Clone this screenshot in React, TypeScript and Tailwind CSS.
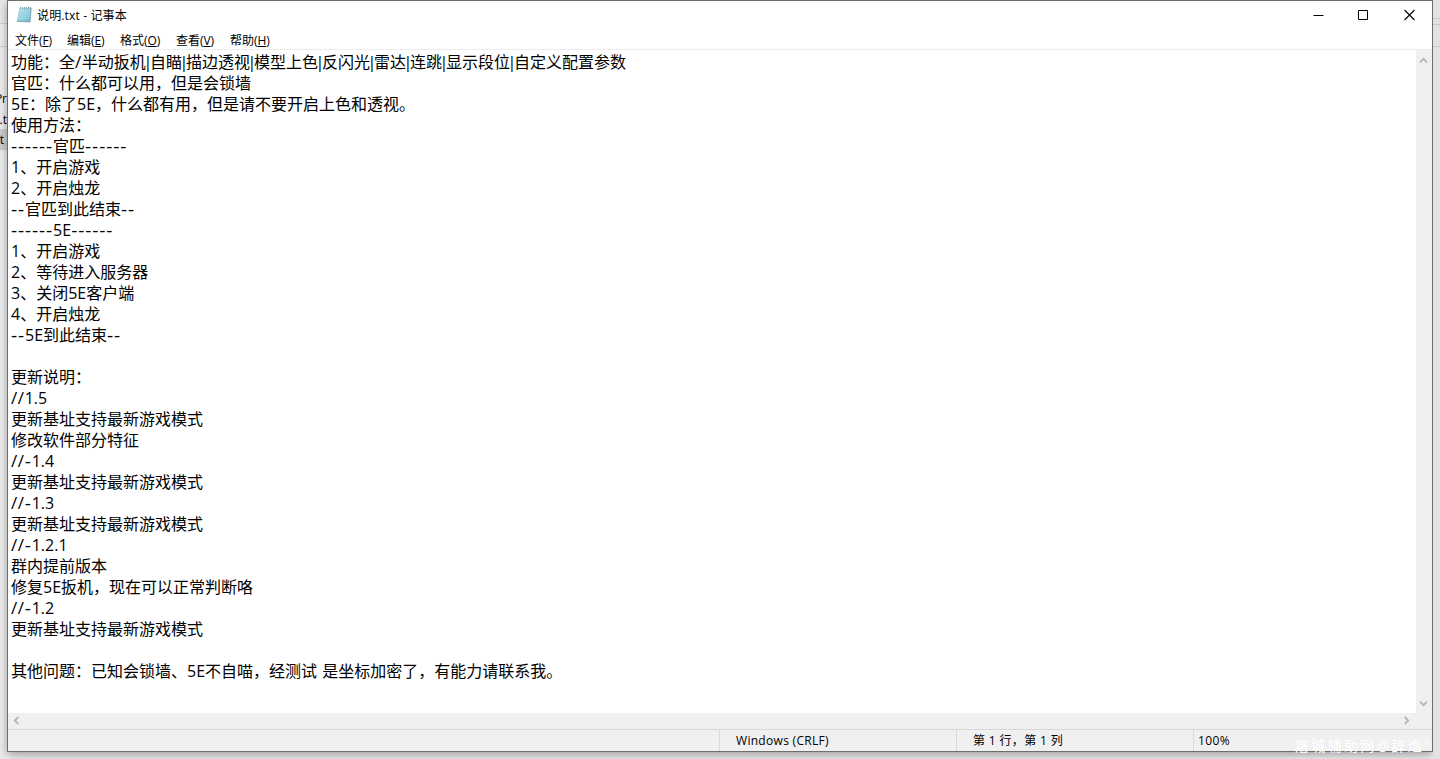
const lines = [
  '功能：全/半动扳机|自瞄|描边透视|模型上色|反闪光|雷达|连跳|显示段位|自定义配置参数',
  '官匹：什么都可以用，但是会锁墙',
  '5E：除了5E，什么都有用，但是请不要开启上色和透视。',
  '使用方法：',
  '------官匹------',
  '1、开启游戏',
  '2、开启烛龙',
  '--官匹到此结束--',
  '------5E------',
  '1、开启游戏',
  '2、等待进入服务器',
  '3、关闭5E客户端',
  '4、开启烛龙',
  '--5E到此结束--',
  '',
  '更新说明：',
  '//1.5',
  '更新基址支持最新游戏模式',
  '修改软件部分特征',
  '//-1.4',
  '更新基址支持最新游戏模式',
  '//-1.3',
  '更新基址支持最新游戏模式',
  '//-1.2.1',
  '群内提前版本',
  '修复5E扳机，现在可以正常判断咯',
  '//-1.2',
  '更新基址支持最新游戏模式',
  '',
  '其他问题：已知会锁墙、5E不自喵，经测试 是坐标加密了，有能力请联系我。',
];

const menus = [
  ['文件', 'F', 'w-[52px]'],
  ['编辑', 'E', 'w-[53px]'],
  ['格式', 'O', 'w-[56px]'],
  ['查看', 'V', 'w-[54px]'],
  ['帮助', 'H', 'w-[52px]'],
];

function Run({ text }: { text: string }) {
  if (text.startsWith('-'))
    return <span className="align-[-1px] text-[19px] leading-none tracking-[0.9px]">{text}</span>;
  if (text.startsWith('/')) return <span className="text-[17px] leading-none tracking-[0.6px]">{text}</span>;
  if (text === '|') return <span className="-ml-[2.4px] tracking-[-2.4px]">{text}</span>;
  if (text === ' ') return <span className="tracking-[1px]">{text}</span>;
  return <span>{text}</span>;
}

function Line({ text }: { text: string }) {
  const runs = text.split(/(-+|\/+|\|| )/).filter(Boolean);
  return (
    <div className="h-[21px] whitespace-pre">
      {runs.map((run, i) => (
        <Run key={i} text={run} />
      ))}
    </div>
  );
}

function Chevron({ className }: { className: string }) {
  return (
    <svg className={className} width="9" height="9" viewBox="0 0 9 9" fill="none" stroke="#b5b5b5" strokeWidth="1.8">
      <path d="M1 6.3 4.5 2.8 8 6.3" />
    </svg>
  );
}

function NotepadIcon() {
  return (
    <svg width="16" height="18" viewBox="0 0 16 18">
      <defs>
        <linearGradient id="paper" x1="0" y1="0" x2="1" y2="1">
          <stop offset="0" stopColor="#c9e8f1" />
          <stop offset=".6" stopColor="#8fcde0" />
          <stop offset="1" stopColor="#62aec8" />
        </linearGradient>
      </defs>
      <path d="M3 2 15.2 1.6 14 16 .8 15.3Z" fill="url(#paper)" />
      <path d="M2.5 6h11.6M2.3 8.2h11.6M2.1 10.4h11.6M1.9 12.6h11.4" stroke="#a5d6e4" strokeWidth=".7" />
      <path d="M15.2 2 14 16 .8 15.3" fill="none" stroke="#6f98a6" strokeWidth=".8" />
      <path d="M4.5 1v2.2M6.5 1v2.2M8.5 1v2.2M10.5 1v2.2M12.5 .8v2.2M14.3 .8v2.2" stroke="#7d9aa5" strokeWidth=".8" />
    </svg>
  );
}

export default function App() {
  return (
    <div className="relative h-[759px] w-[1440px] overflow-hidden bg-[#f0f0f0] font-['Open_Sans','Noto_Sans_CJK_SC',sans-serif] text-black">
      <div className="flex h-full">
        <div className="flex w-[7px] shrink-0 flex-col overflow-hidden bg-[#ededed] text-[12px] leading-[21px]">
          <div className="h-[24px] shrink-0 border-b border-[#d2d2d2] bg-[#e9e9e9]" />
          <div className="h-[23px] shrink-0 border-b border-[#d2d2d2]" />
          <div className="mt-[41px] flex h-[21px] justify-end">Pr</div>
          <div className="flex h-[20px] justify-end">g.t</div>
          <div className="flex h-[21px] justify-end bg-[#cfcfcf] pr-[3px]">t</div>
        </div>
        <div className="flex h-[752px] w-[1426px] shrink-0 flex-col border border-[#6e6e6e] bg-white shadow-[0_3px_9px_rgba(0,0,0,0.35)]">
          <header className="flex h-[28px] shrink-0 items-center pl-[8px] text-[12px]">
            <NotepadIcon />
            <span className="ml-[5px] w-[120px] whitespace-pre pt-px tracking-[0.15px]">说明.txt - 记事本</span>
            <div className="ml-auto flex items-center pr-[16px]">
              <svg width="103" height="12" viewBox="0 0 103 12" fill="none" stroke="black">
                <path d="M.5 6.5h10" />
                <path d="M45.5 1.5h9v9h-9z" />
                <path d="m91.5 1 10 10m0-10-10 10" strokeWidth="1.1" />
              </svg>
            </div>
          </header>
          <nav className="flex h-[21px] shrink-0 items-center border-b border-[#ededed] pl-[7px] pt-[4px] text-[12px] leading-[16px]">
            {menus.map(([label, key, width]) => (
              <span key={key} className={`${width} shrink-0 whitespace-nowrap`}>
                {label}<span className="tracking-[-0.1px]">(<u className="underline-offset-1">{key}</u>)</span>
              </span>
            ))}
          </nav>
          <div className="flex min-h-0 flex-1">
            <main className="flex-1 pl-[3px] pt-[2px] text-[16px] leading-[21px]">
              {lines.map((line, i) => (
                <Line key={i} text={line} />
              ))}
            </main>
            <div className="flex w-[16px] flex-col items-start justify-between bg-[#f0f0f0] pb-[5px] pl-[3px] pt-[6px]">
              <Chevron className="" />
              <Chevron className="rotate-180" />
            </div>
          </div>
          <div className="flex h-[16px] shrink-0 items-center justify-between bg-[#f0f0f0] pb-px pl-[4px] pr-[21px]">
            <Chevron className="-rotate-90" />
            <Chevron className="rotate-90" />
          </div>
          <footer className="flex h-[22px] shrink-0 items-center border-t border-[#d7d7d7] bg-[#f0f0f0] text-[12px] leading-[21px]">
            <div className="w-[711px]" />
            <div className="h-full w-[237px] border-l border-[#d9d9d9] pl-[16px] tracking-[0.3px]">Windows (CRLF)</div>
            <div className="h-full w-[237px] border-l border-[#d9d9d9] pl-[16px] tracking-[0.35px]">第 1 行，第 1 列</div>
            <div className="h-full border-l border-[#d9d9d9] pl-[4px] tracking-[0.4px]">100%</div>
          </footer>
        </div>
        <div className="w-[7px] bg-[#e2e2e2]">
          <div className="h-[19px] border-b border-[#c9c9c9]" />
          <div className="h-[6px] border-b border-[#c9c9c9]" />
          <div className="h-[22px] border-b border-[#c9c9c9]" />
        </div>
      </div>
      <div className="absolute left-[1295px] top-[736px] whitespace-nowrap text-[14px] leading-[20px] tracking-[2.3px] text-white">
        屠城辅助网@辞逸°
      </div>
    </div>
  );
}
